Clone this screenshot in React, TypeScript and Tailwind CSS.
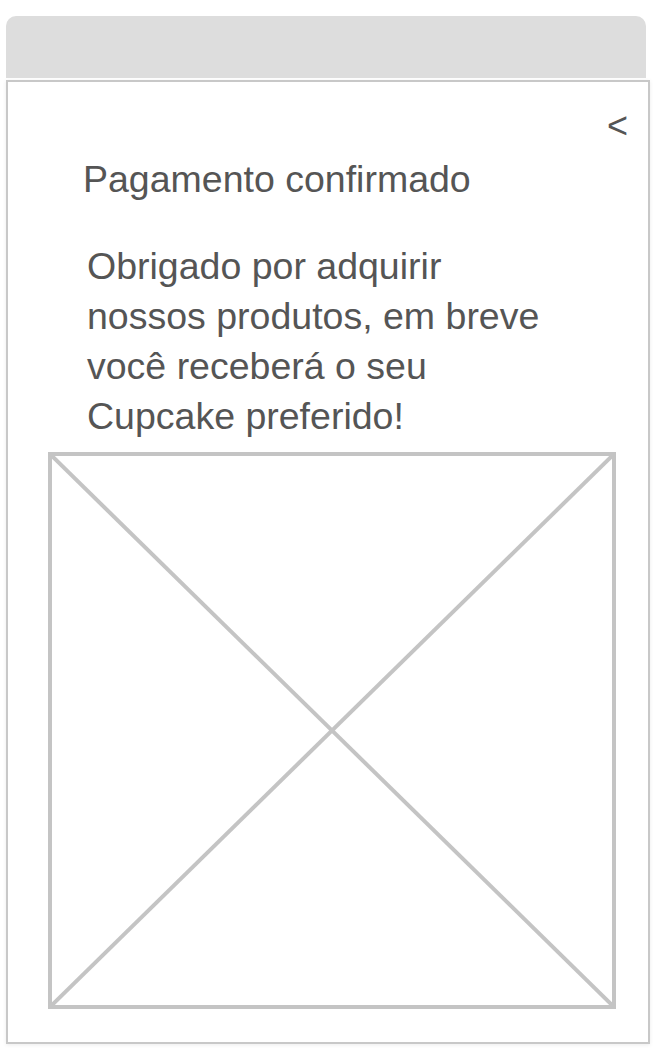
export default function App() {
  return (
    <div className="w-[664px] h-[1056px] bg-white" style={{ fontFamily: '"Liberation Sans", Arial, sans-serif' }}>
      <div className="pt-[16px] pl-[6px]">
        <div className="w-[640px] h-[62px] bg-[#dddddd] rounded-t-[10px]" />
        <div className="mt-[2px] w-[644px] h-[964px] border-2 border-[#c8c8c8] shadow-[0_1px_4px_rgba(0,0,0,0.08)] flex flex-col">
          <div className="flex justify-end pt-[30px] pr-[20px]">
            <span className="text-[36px] leading-[28px] text-[#555555]">&lt;</span>
          </div>
          <div className="mt-[14px] ml-[75px] text-[37.5px] leading-[50px] text-[#555555]">Pagamento confirmado</div>
          <div className="mt-[37px] ml-[79px] w-[470px] text-[37.5px] leading-[50px] text-[#555555]">
            Obrigado por adquirir nossos produtos, em breve você receberá o seu Cupcake preferido!
          </div>
          <div className="mt-[11px] ml-[40px] w-[568px] h-[557px] border-[4px] border-[#c4c4c4] relative">
            <svg className="absolute inset-0 w-full h-full" viewBox="0 0 100 100" preserveAspectRatio="none">
              <line x1="0" y1="0" x2="100" y2="100" stroke="#c4c4c4" strokeWidth="4" vectorEffect="non-scaling-stroke" />
              <line x1="100" y1="0" x2="0" y2="100" stroke="#c4c4c4" strokeWidth="4" vectorEffect="non-scaling-stroke" />
            </svg>
          </div>
        </div>
      </div>
    </div>
  );
}
